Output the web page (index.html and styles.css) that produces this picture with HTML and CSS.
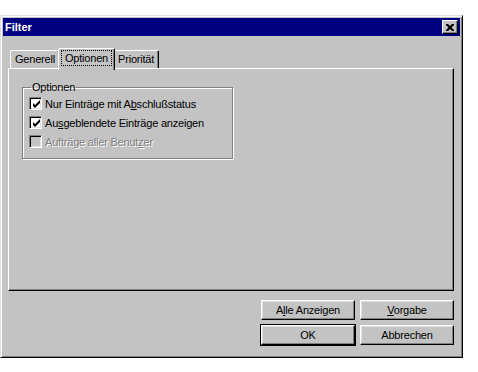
FILE: index.html
```html
<!DOCTYPE html>
<html lang="de">
<head>
  <meta charset="UTF-8" />
  <title>Filter</title>
  <link rel="stylesheet" href="styles.css">
</head>
<body>
  <div class="window">
    <div class="titlebar">
      <span class="title">Filter</span>
      <span class="close">
        <svg width="8" height="7" viewBox="0 0 8 7"><path d="M0 0h2l2 2 2-2h2v1L5.5 3.5 8 6v1H6L4 5 2 7H0V6l2.5-2.5L0 1z" fill="#000"/></svg>
      </span>
    </div>

    <div class="client">
      <div class="tabs">
        <div class="tab">Generell</div>
        <div class="tab active"><span class="focus">Optionen</span></div>
        <div class="tab">Priorität</div>
      </div>

      <div class="panel">
        <fieldset class="group">
          <legend>Optionen</legend>
          <label class="check">
            <span class="box"><svg width="9" height="9" viewBox="0 0 9 9"><path d="M1 3v3l2 2 5-5V0L3 5z" fill="#000"/></svg></span>
            <span>Nur Einträge mit A<u>b</u>schlußstatus</span>
          </label>
          <label class="check">
            <span class="box"><svg width="9" height="9" viewBox="0 0 9 9"><path d="M1 3v3l2 2 5-5V0L3 5z" fill="#000"/></svg></span>
            <span>Au<u>s</u>geblendete Einträge anzeigen</span>
          </label>
          <label class="check disabled">
            <span class="box"></span>
            <span>Aufträge aller Benut<u>z</u>er</span>
          </label>
        </fieldset>
      </div>

      <div class="buttons">
        <button>A<u>l</u>le Anzeigen</button>
        <button><u>V</u>orgabe</button>
        <button class="default">OK</button>
        <button>Abbrechen</button>
      </div>
    </div>
  </div>
</body>
</html>
```

FILE: styles.css
```css
:root {
  --face: #c3c3c3;
  --shadow: #808080;
  --light: #dfdfdf;
  --title: #000080;
}

* {
  box-sizing: border-box;
  margin: 0;
  padding: 0;
}

body {
  background: #ffffff;
  font-family: 'Liberation Sans', Arial, sans-serif;
  font-size: 11px;
  letter-spacing: -0.2px;
  color: #000;
}

.window {
  width: 463px;
  height: 343px;
  margin-top: 15px;
  background: var(--face);
  border: 1px solid;
  border-color: var(--light) #000 #000 var(--light);
  box-shadow: inset 1px 1px #fff, inset -1px -1px var(--shadow);
  padding: 2px;
  display: flex;
  flex-direction: column;
}

.titlebar {
  height: 18px;
  background: var(--title);
  display: flex;
  align-items: center;
  justify-content: space-between;
  padding: 0 2px 0 2px;
}

.title {
  color: #fff;
  font-weight: bold;
  font-size: 11px;
  letter-spacing: 0;
}

.close {
  width: 16px;
  height: 14px;
  background: var(--face);
  border: 1px solid;
  border-color: #fff #000 #000 #fff;
  box-shadow: inset -1px -1px var(--shadow);
  display: flex;
  align-items: center;
  justify-content: center;
}

.client {
  flex: 1;
  padding: 13px 6px 0 5px;
  display: flex;
  flex-direction: column;
}

.tabs {
  display: flex;
  align-items: flex-end;
  height: 21px;
  padding-left: 2px;
  margin-bottom: -2px;
}

.tab {
  height: 18px;
  padding: 0 4px;
  line-height: 16px;
  background: var(--face);
  border: 1px solid;
  border-bottom: none;
  border-color: #fff #000 transparent #fff;
  box-shadow: inset -1px 0 var(--shadow);
  border-radius: 2px 2px 0 0;
  margin-bottom: 2px;
}

.tab.active {
  height: 22px;
  padding: 1px 3px 0 3px;
  margin: 0 -1px;
  position: relative;
  z-index: 1;
}

.focus {
  display: inline-block;
  padding: 0 3px;
  line-height: 14px;
  outline: 1px dotted #000;
}

.tab + .tab.active {
  margin-left: -2px;
}

.tab.active + .tab {
  margin-left: -1px;
}

.panel {
  height: 223px;
  border: 1px solid;
  border-color: #fff #000 #000 #fff;
  box-shadow: inset -1px -1px var(--shadow);
  padding: 12px 0 0 13px;
}

.group {
  width: 211px;
  height: 78px;
  border: 1px solid var(--shadow);
  box-shadow: inset 1px 1px #fff, 1px 1px #fff;
  padding: 3px 6px 0 6px;
  display: flex;
  flex-direction: column;
  gap: 6px;
}

.group legend {
  padding: 0 1px;
  margin-left: 2px;
  line-height: 13px;
}

.check {
  display: flex;
  align-items: center;
  gap: 3px;
  height: 13px;
}

.box {
  flex: none;
  width: 13px;
  height: 13px;
  background: #fff;
  border: 1px solid;
  border-color: var(--shadow) #fff #fff var(--shadow);
  box-shadow: inset 1px 1px #000, inset -1px -1px var(--light);
  display: flex;
  align-items: center;
  justify-content: center;
  padding: 1px 0 0 1px;
}

.check.disabled {
  color: var(--shadow);
  text-shadow: 1px 1px 0 #fff;
}

.check.disabled .box {
  background: var(--face);
}

.buttons {
  display: grid;
  grid-template-columns: 94px 94px;
  grid-auto-rows: 20px;
  gap: 5px;
  justify-content: end;
  margin-top: 9px;
}

button {
  font: inherit;
  letter-spacing: inherit;
  color: #000;
  background: var(--face);
  border: 1px solid;
  border-color: #fff #000 #000 #fff;
  box-shadow: inset -1px -1px var(--shadow), inset 1px 1px var(--light);
}

button.default {
  outline: 1px solid #000;
}
```
